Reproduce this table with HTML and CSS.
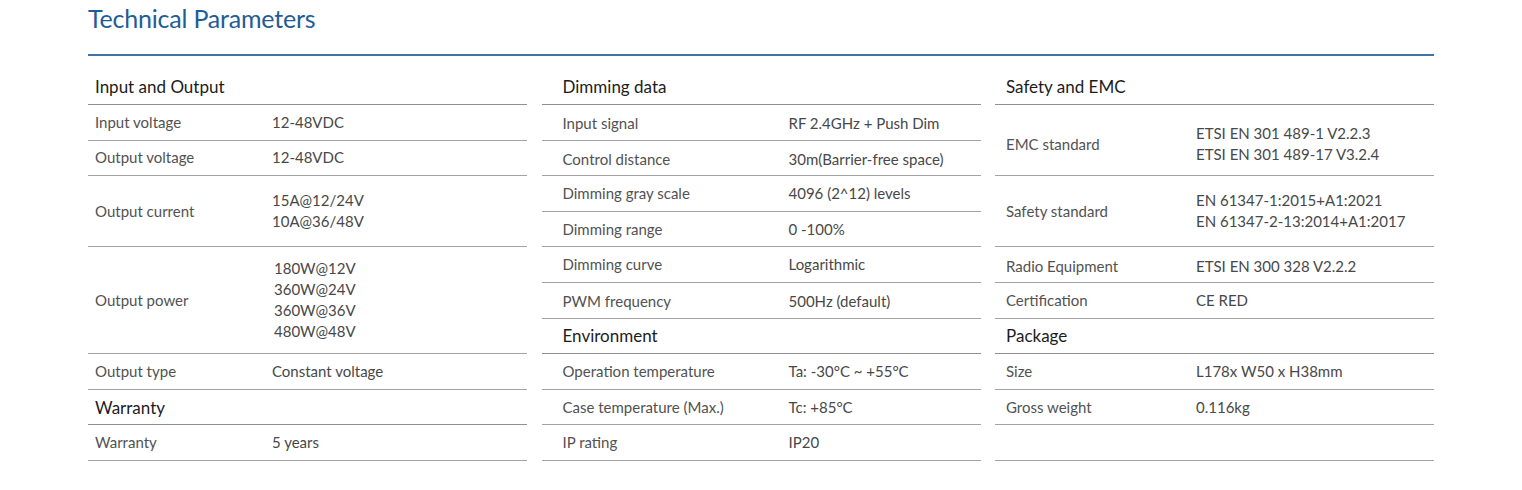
FILE: index.html
```html
<!DOCTYPE html>
<html lang="en">
<head>
<meta charset="utf-8">
<title>Technical Parameters</title>
<link rel="stylesheet" href="styles.css">
</head>
<body>
<div class="page">
  <h1 class="title">Technical Parameters</h1>
  <div class="rule"></div>
  <div class="cols">
    <div class="col col-a">
      <div class="row head">Input and Output</div>
      <div class="row"><div class="lab">Input voltage</div><div class="val">12-48VDC</div></div>
      <div class="row"><div class="lab">Output voltage</div><div class="val">12-48VDC</div></div>
      <div class="row u2"><div class="lab">Output current</div><div class="val">15A@12/24V<br>10A@36/48V</div></div>
      <div class="row u3"><div class="lab">Output power</div><div class="val ind">180W@12V<br>360W@24V<br>360W@36V<br>480W@48V</div></div>
      <div class="row"><div class="lab">Output type</div><div class="val">Constant voltage</div></div>
      <div class="row head">Warranty</div>
      <div class="row"><div class="lab">Warranty</div><div class="val">5 years</div></div>
    </div>
    <div class="col col-b">
      <div class="row head">Dimming data</div>
      <div class="row low"><div class="lab">Input signal</div><div class="val">RF 2.4GHz + Push Dim</div></div>
      <div class="row low"><div class="lab">Control distance</div><div class="val">30m(Barrier-free space)</div></div>
      <div class="row"><div class="lab">Dimming gray scale</div><div class="val">4096 (2^12) levels</div></div>
      <div class="row"><div class="lab">Dimming range</div><div class="val">0 -100%</div></div>
      <div class="row"><div class="lab">Dimming curve</div><div class="val">Logarithmic</div></div>
      <div class="row low"><div class="lab">PWM frequency</div><div class="val">500Hz (default)</div></div>
      <div class="row head">Environment</div>
      <div class="row"><div class="lab">Operation temperature</div><div class="val">Ta: -30°C ~ +55°C</div></div>
      <div class="row"><div class="lab">Case temperature (Max.)</div><div class="val">Tc: +85°C</div></div>
      <div class="row"><div class="lab">IP rating</div><div class="val">IP20</div></div>
    </div>
    <div class="col col-c">
      <div class="row head">Safety and EMC</div>
      <div class="row u2 emc"><div class="lab">EMC standard</div><div class="val">ETSI EN 301 489-1 V2.2.3<br>ETSI EN 301 489-17 V3.2.4</div></div>
      <div class="row u2"><div class="lab">Safety standard</div><div class="val">EN 61347-1:2015+A1:2021<br>EN 61347-2-13:2014+A1:2017</div></div>
      <div class="row low"><div class="lab">Radio Equipment</div><div class="val">ETSI EN 300 328 V2.2.2</div></div>
      <div class="row"><div class="lab">Certification</div><div class="val">CE RED</div></div>
      <div class="row head">Package</div>
      <div class="row"><div class="lab">Size</div><div class="val">L178x W50 x H38mm</div></div>
      <div class="row"><div class="lab">Gross weight</div><div class="val">0.116kg</div></div>
      <div class="row"></div>
    </div>
  </div>
</div>
</body>
</html>
```

FILE: styles.css
```css
html, body {
  margin: 0;
  padding: 0;
  background: #ffffff;
}

body {
  font-family: Lato, "Open Sans", "Liberation Sans", sans-serif;
  color: #4d4d4d;
}

.page {
  width: 1346px;
  margin-left: 88px;
  padding-top: 3px;
}

.title {
  margin: 0;
  font-size: 25px;
  font-weight: 400;
  line-height: 30px;
  color: #1f5d96;
  letter-spacing: -0.2px;
}

.rule {
  margin-top: 21px;
  height: 2px;
  background: #3f73a3;
}

.cols {
  margin-top: 13.4px;
  display: grid;
  grid-template-columns: 1fr 1fr 1fr;
  column-gap: 14.5px;
}

.col-a { --pl: 7px; --lw: 177px; }
.col-b { --pl: 21px; --lw: 226px; }
.col-c { --pl: 11px; --lw: 190px; }

.row {
  box-sizing: border-box;
  height: 35.6px;
  display: grid;
  grid-template-columns: var(--lw) 1fr;
  align-items: center;
  padding-left: var(--pl);
  border-bottom: 1px solid #a3a3a3;
  font-size: 15px;
  line-height: 21px;
}

.row.u2 { height: 71.2px; }
.row.u3 { height: 106.8px; }

.row.low { padding-top: 3px; }
.row.emc { padding-top: 8px; }

.row.head {
  display: flex;
  font-size: 17px;
  color: #1c1c1c;
  border-bottom-color: #8f8f8f;
}

.lab {
  color: #525252;
}

.val {
  color: #484848;
}

.val.ind {
  padding-left: 2px;
}
```
